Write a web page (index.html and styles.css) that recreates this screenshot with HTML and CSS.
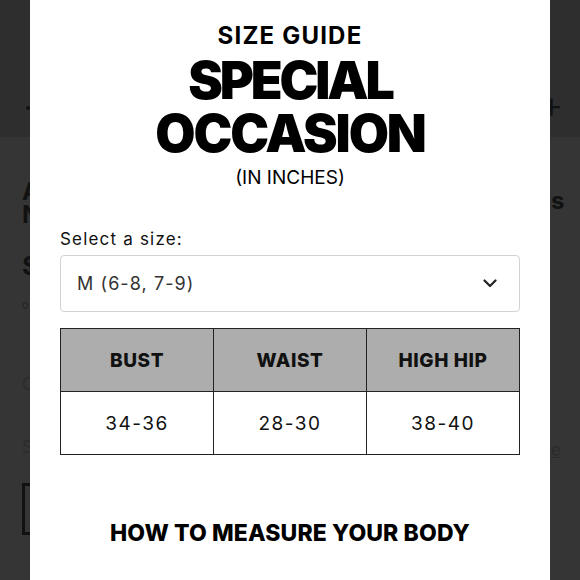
FILE: index.html
```html
<!DOCTYPE html>
<html>
<head>
<meta charset="utf-8">
<link rel="stylesheet" href="styles.css">
</head>
<body>
<div class="screen">
  <aside class="strip strip-left">
    <div class="strip-head">
      <span class="menu-dot"></span>
    </div>
    <div class="strip-body">
      <div class="bg-title">A</div>
      <div class="bg-title">N</div>
      <div class="bg-price">$</div>
      <div class="bg-note">o</div>
      <div class="bg-label bg-colour">C</div>
      <div class="bg-label bg-size">S</div>
      <div class="bg-btn"></div>
    </div>
  </aside>

  <section class="modal">
    <h2 class="kicker">SIZE GUIDE</h2>
    <h1 class="headline"><span class="l1">SPECIAL</span><span class="l2">OCCASION</span></h1>
    <p class="unit">(IN INCHES)</p>

    <label class="select-label">Select a size:</label>
    <div class="select">
      <span>M (6-8, 7-9)</span>
      <svg class="chev" width="14" height="9" viewBox="0 0 14 9"><path d="M1.5 1.5 L7 7 L12.5 1.5" fill="none" stroke="#222" stroke-width="2.2" stroke-linecap="round" stroke-linejoin="round"/></svg>
    </div>

    <table class="chart">
      <thead>
        <tr><th>BUST</th><th>WAIST</th><th>HIGH HIP</th></tr>
      </thead>
      <tbody>
        <tr><td>34-36</td><td>28-30</td><td>38-40</td></tr>
      </tbody>
    </table>

    <h3 class="measure">HOW TO MEASURE YOUR BODY</h3>
  </section>

  <aside class="strip strip-right">
    <div class="strip-head">
      <span class="plus">+</span>
    </div>
    <div class="strip-body">
      <div class="bg-s">s</div>
      <div class="bg-link">e</div>
    </div>
  </aside>
</div>
</body>
</html>
```

FILE: styles.css
```css
html, body {
  margin: 0;
  padding: 0;
  height: 100%;
  overflow: hidden;
}
body {
  background: #353535;
  font-family: Inter, "Liberation Sans", sans-serif;
}
.screen {
  display: grid;
  grid-template-columns: 30px 520px 30px;
  height: 100%;
}
.strip {
  overflow: hidden;
  display: flex;
  flex-direction: column;
  color: #111;
}
.strip-head {
  height: 137px;
  flex: none;
  background: #2e2e2e;
}
.strip-body {
  flex: 1;
  background: #353535;
}
.strip-left .strip-head {
  display: flex;
  align-items: flex-end;
  padding: 0 0 27px 26px;
  box-sizing: border-box;
}
.menu-dot {
  width: 4px;
  height: 4px;
  background: #111;
  border-radius: 50%;
}
.strip-left .strip-body {
  padding: 43px 0 0 22px;
}
.bg-title {
  font-size: 24px;
  height: 23px;
  line-height: 23px;
  font-weight: 700;
  overflow: hidden;
}
.bg-price {
  margin-top: 26px;
  font-size: 26px;
  line-height: 28px;
  font-weight: 700;
}
.bg-note {
  margin-top: 18px;
  font-size: 11px;
  line-height: 14px;
  color: #222;
}
.bg-label {
  font-size: 17px;
  line-height: 20px;
  color: #2b2b2b;
}
.bg-colour {
  margin-top: 62px;
}
.bg-size {
  margin-top: 43px;
}
.bg-btn {
  margin-top: 26px;
  width: 60px;
  height: 52px;
  box-sizing: border-box;
  border: 3px solid #111;
}

.strip-right .strip-head {
  display: flex;
  align-items: flex-end;
  padding-bottom: 14px;
  box-sizing: border-box;
}
.plus {
  font-size: 38px;
  line-height: 38px;
  font-weight: 300;
  margin-left: -11px;
}
.strip-right .strip-body {
  padding: 52px 0 0 1px;
}
.bg-s {
  font-size: 24px;
  line-height: 24px;
  font-weight: 700;
}
.bg-link {
  margin-top: 227px;
  font-size: 17px;
  line-height: 20px;
  color: #2b2b2b;
  text-decoration: underline;
}

.modal {
  background: #fff;
  box-sizing: border-box;
  padding: 22px 30px 0;
  display: flex;
  flex-direction: column;
  align-items: center;
  color: #000;
  min-width: 0;
}
.kicker {
  margin: 0;
  font-size: 24px;
  line-height: 28px;
  font-weight: 700;
  letter-spacing: 0.05em;
}
.headline {
  margin: 4px 0 0;
  font-size: 52px;
  font-weight: 900;
  letter-spacing: -0.04em;
  text-align: center;
  display: flex;
  flex-direction: column;
  align-items: center;
}
.headline span {
  display: block;
  height: 53px;
  line-height: 53px;
}
.headline .l1 {
  letter-spacing: -0.06em;
}
.unit {
  margin: 6px 0 0;
  font-size: 19px;
  line-height: 24px;
  font-weight: 400;
  letter-spacing: 0;
}
.select-label {
  align-self: stretch;
  margin-top: 38px;
  font-size: 17px;
  line-height: 22px;
  letter-spacing: 0.07em;
  color: #111;
}
.select {
  align-self: stretch;
  margin-top: 5px;
  height: 57px;
  box-sizing: border-box;
  border: 1px solid #d2d2d2;
  border-radius: 4px;
  display: flex;
  align-items: center;
  justify-content: space-between;
  padding: 0 22px 0 16px;
  font-size: 18px;
  color: #333;
  letter-spacing: 0.06em;
}
.chev {
  display: block;
}
.chart {
  align-self: stretch;
  margin-top: 16px;
  border-collapse: collapse;
  table-layout: fixed;
  width: 100%;
}
.chart th, .chart td {
  border: 1.5px solid #222;
  text-align: center;
  height: 62px;
  padding: 0;
}
.chart th {
  background: #adadad;
  font-size: 19px;
  font-weight: 800;
  letter-spacing: 0.03em;
  color: #111;
}
.chart td {
  font-size: 19px;
  font-weight: 400;
  letter-spacing: 0.08em;
  color: #111;
}
.measure {
  margin: 64px 0 0;
  font-size: 23px;
  line-height: 28px;
  font-weight: 800;
  letter-spacing: 0.005em;
}
```
